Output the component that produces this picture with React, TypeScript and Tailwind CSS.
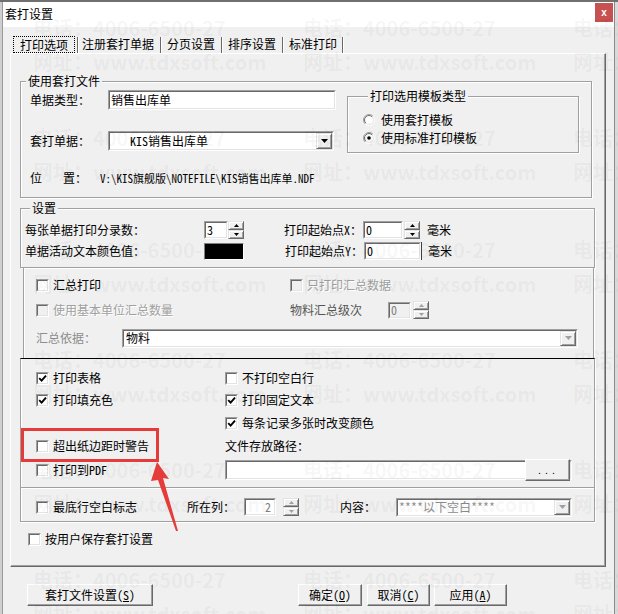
import React from "react";

const raised =
  "border border-t-[#e3e3e3] border-l-[#e3e3e3] border-r-[#696969] border-b-[#696969] bg-[#f0f0f0] shadow-[inset_1px_1px_0_#fff,inset_-1px_-1px_0_#a0a0a0]";

function Sunken({ className = "", inner = "bg-white", children }: { className?: string; inner?: string; children?: React.ReactNode }) {
  return (
    <div className={`flex border border-t-[#a0a0a0] border-l-[#a0a0a0] border-r-white border-b-white ${className}`}>
      <div className={`flex flex-1 items-center min-w-0 border border-t-[#696969] border-l-[#696969] border-r-[#e3e3e3] border-b-[#e3e3e3] ${inner}`}>
        {children}
      </div>
    </div>
  );
}

function Check({ checked = false, disabled = false }: { checked?: boolean; disabled?: boolean }) {
  return (
    <span className="flex w-[13px] h-[13px] shrink-0 border border-t-[#a0a0a0] border-l-[#a0a0a0] border-r-white border-b-white">
      <span
        className={`flex flex-1 items-center justify-center border border-t-[#696969] border-l-[#696969] border-r-[#e3e3e3] border-b-[#e3e3e3] ${
          disabled ? "bg-[#f0f0f0]" : "bg-white"
        }`}
      >
        {checked && (
          <svg width="9" height="9" viewBox="0 0 9 9">
            <path d="M1.2 4.2 L3.6 6.6 L8 1.6" stroke="#000" strokeWidth="1.9" fill="none" />
          </svg>
        )}
      </span>
    </span>
  );
}

function CheckRow({ label, checked, disabled, className = "" }: { label: string; checked?: boolean; disabled?: boolean; className?: string }) {
  return (
    <div className={`flex items-center h-[16px] ${className}`}>
      <Check checked={checked} disabled={disabled} />
      <span className={`ml-[4px] whitespace-nowrap ${disabled ? "text-[#a0a0a0] [text-shadow:1px_1px_0_#fff]" : ""}`}>{label}</span>
    </div>
  );
}

function Radio({ checked = false }: { checked?: boolean }) {
  return (
    <svg width="12" height="12" viewBox="0 0 12 12" className="shrink-0">
      <defs>
        <linearGradient id="ro" x1="0" y1="0" x2="1" y2="1">
          <stop offset="0.45" stopColor="#a0a0a0" />
          <stop offset="0.55" stopColor="#ffffff" />
        </linearGradient>
        <linearGradient id="ri" x1="0" y1="0" x2="1" y2="1">
          <stop offset="0.45" stopColor="#696969" />
          <stop offset="0.55" stopColor="#e3e3e3" />
        </linearGradient>
      </defs>
      <circle cx="6" cy="6" r="5.5" fill="none" stroke="url(#ro)" />
      <circle cx="6" cy="6" r="4.5" fill="#fff" stroke="url(#ri)" />
      {checked && <circle cx="6" cy="6" r="1.8" fill="#000" />}
    </svg>
  );
}

function Spin({ disabled = false }: { disabled?: boolean }) {
  const c = disabled ? "#a0a0a0" : "#000";
  return (
    <div className="flex flex-col w-[16px] h-[18px] shrink-0">
      <div className={`flex flex-1 items-center justify-center ${raised}`}>
        <svg width="5" height="3" viewBox="0 0 5 3">
          <path d="M2.5 0 L5 3 L0 3 Z" fill={c} />
        </svg>
      </div>
      <div className={`flex flex-1 items-center justify-center ${raised}`}>
        <svg width="5" height="3" viewBox="0 0 5 3">
          <path d="M0 0 L5 0 L2.5 3 Z" fill={c} />
        </svg>
      </div>
    </div>
  );
}

function DropBtn({ disabled = false }: { disabled?: boolean }) {
  return (
    <div className={`ml-auto flex items-center justify-center w-[16px] h-full shrink-0 ${raised}`}>
      <svg width="7" height="4" viewBox="0 0 7 4">
        <path d="M0 0 L7 0 L3.5 4 Z" fill={disabled ? "#a0a0a0" : "#000"} />
      </svg>
    </div>
  );
}

function Button({ className = "", children }: { className?: string; children: React.ReactNode }) {
  return (
    <div
      className={`flex items-center justify-center h-[22px] border border-t-white border-l-white border-r-[#696969] border-b-[#696969] bg-[#f0f0f0] shadow-[inset_-1px_-1px_0_#a0a0a0] ${className}`}
    >
      {children}
    </div>
  );
}

const legend = "ml-[5px] px-[2px] leading-[14px] bg-[#f0f0f0]";
const groupBox = "border border-[#a0a0a0] shadow-[inset_1px_1px_0_#fff,1px_1px_0_#fff]";

const markRows = [28, 138, 250, 360, 470, 580];
const markCols = [33, 303, 573];

export default function App() {
  return (
    <div className="relative w-[618px] h-[614px] overflow-hidden bg-[#dadada] text-[12px] leading-[16px] text-black font-['Noto_Sans_Mono_CJK_SC','Noto_Sans_CJK_SC',sans-serif]">
      <div className="h-[2px] bg-[#707070]" />
      <div className="flex h-[612px]">
        <div className="w-[3px] bg-[#cfcfcf] border-r border-[#9a9a9a]" />
        <div className="w-[612px] flex flex-col border-r border-[#8a8a8a] bg-[#f0f0f0]">
          {/* title bar */}
          <div className="flex items-start h-[25px] bg-white">
            <span className="pl-[2px] mt-[4px] font-['Noto_Sans_CJK_SC',sans-serif] text-[12px]">套打设置</span>
            <div className="ml-auto mt-[1px] mr-[1px] w-[18px] h-[19px] bg-[#c75050] flex items-center justify-center text-white text-[10px] font-bold font-['Liberation_Sans',sans-serif]">
              x
            </div>
          </div>

          {/* tabs */}
          <div className="flex items-end h-[19px] mt-[7px] pl-[10px]">
            <div className="flex items-center justify-center w-[62px] h-[17px] border border-dotted border-black">打印选项</div>
            <span className="ml-[2px] h-[16px] w-[2px] border-l border-[#696969] bg-white" />
            <span className="ml-[3px] mb-[1px]">注册套打单据</span>
            <span className="ml-[6px] h-[16px] w-[2px] border-l border-[#696969] bg-white" />
            <span className="ml-[5px] mb-[1px]">分页设置</span>
            <span className="ml-[6px] h-[16px] w-[2px] border-l border-[#696969] bg-white" />
            <span className="ml-[5px] mb-[1px]">排序设置</span>
            <span className="ml-[6px] h-[16px] w-[2px] border-l border-[#696969] bg-white" />
            <span className="ml-[5px] mb-[1px]">标准打印</span>
            <span className="ml-[5px] h-[16px] w-[2px] border-l border-[#696969] bg-white" />
          </div>

          {/* tab page */}
          <div className="ml-[7px] w-[596px] h-[514px] flex flex-col border border-t-white border-l-white border-r-[#696969] border-b-[#696969] shadow-[inset_-1px_-1px_0_#a0a0a0]">
            {/* 使用套打文件 */}
            <fieldset className={`mt-[20px] ml-[9px] w-[572px] pb-[11px] ${groupBox}`}>
              <legend className={legend}>使用套打文件</legend>
              <div className="flex items-start">
                <div className="w-[315px] pl-[9px] pt-[2px] flex flex-col">
                  <div className="flex items-center h-[20px]">
                    <span className="w-[78px]">单据类型：</span>
                    <Sunken className="w-[228px] h-[20px]">
                      <span className="pl-[1px]">销售出库单</span>
                    </Sunken>
                  </div>
                  <div className="flex items-center h-[20px] mt-[21px]">
                    <span className="w-[78px]">套打单据：</span>
                    <Sunken className="w-[226px] h-[20px]">
                      <span className="pl-[20px]">KIS销售出库单</span>
                      <DropBtn />
                    </Sunken>
                  </div>
                  <div className="flex items-center h-[16px] mt-[19px]">
                    <span className="w-[70px] flex">
                      <span>位</span>
                      <span className="ml-[21px]">置：</span>
                    </span>
                    <span className="text-[11px] whitespace-nowrap">V:\KIS旗舰版\NOTEFILE\KIS销售出库单.NDF</span>
                  </div>
                </div>
                <fieldset className={`ml-[11px] mt-[1px] w-[232px] pl-[15px] pt-[9px] pb-[6px] ${groupBox}`}>
                  <legend className={legend}>打印选用模板类型</legend>
                  <div className="flex items-center h-[16px]">
                    <Radio />
                    <span className="ml-[6px]">使用套打模板</span>
                  </div>
                  <div className="flex items-center h-[16px] mt-[2px]">
                    <Radio checked />
                    <span className="ml-[6px]">使用标准打印模板</span>
                  </div>
                </fieldset>
              </div>
            </fieldset>

            {/* 设置 */}
            <fieldset className={`mt-[3px] ml-[9px] w-[575px] pt-[6px] pb-[7px] pl-[4px] ${groupBox}`}>
              <legend className={legend}>设置</legend>
              <div className="flex items-center h-[18px]">
                <span className="w-[179px]">每张单据打印分录数：</span>
                <Sunken className="w-[24px] h-[18px]">
                  <span className="pl-[1px]">3</span>
                </Sunken>
                <Spin />
                <span className="ml-[40px] w-[79px]">打印起始点X：</span>
                <Sunken className="w-[40px] h-[18px]">
                  <span className="pl-[1px]">0</span>
                </Sunken>
                <span className="ml-[1px]">
                  <Spin />
                </span>
                <span className="ml-[7px]">毫米</span>
              </div>
              <div className="flex items-center h-[18px] mt-[3px]">
                <span className="w-[179px]">单据活动文本颜色值：</span>
                <div className="w-[40px] h-[17px] bg-black border border-t-[#808080] border-l-[#808080] border-r-white border-b-white" />
                <span className="ml-[41px] w-[79px]">打印起始点Y：</span>
                <Sunken className="w-[57px] h-[18px]">
                  <span className="pl-[1px]">0</span>
                </Sunken>
                <span className="w-px h-[18px] bg-[#404040]" />
                <span className="ml-[6px]">毫米</span>
              </div>
            </fieldset>

            {/* 汇总 */}
            <div className="ml-[12px] w-[571px] h-[90px] flex flex-col pt-[9px] pl-[12px] border-l border-r border-[#a0a0a0] shadow-[inset_1px_0_0_#fff,1px_0_0_#fff]">
              <div className="flex items-center h-[16px]">
                <CheckRow label="汇总打印" className="w-[254px]" />
                <CheckRow label="只打印汇总数据" disabled />
              </div>
              <div className="flex items-center h-[18px] mt-[8px]">
                <CheckRow label="使用基本单位汇总数量" disabled className="w-[254px]" />
                <span className="w-[98px] text-[#555]">物料汇总级次</span>
                <Sunken className="w-[23px] h-[17px]" inner="bg-[#f0f0f0]">
                  <span className="pl-[1px] text-[#808080]">0</span>
                </Sunken>
                <span className="ml-[2px]">
                  <Spin disabled />
                </span>
              </div>
              <div className="flex items-center h-[20px] mt-[9px]">
                <span className="w-[86px] text-[#8c8c8c]">汇总依据：</span>
                <Sunken className="w-[456px] h-[19px]">
                  <span className="pl-[2px]">物料</span>
                  <DropBtn disabled />
                </Sunken>
              </div>
            </div>

            {/* options */}
            <div className="ml-[9px] w-[575px] flex flex-col pt-[11px] pb-[4px] border-t border-l border-r border-b border-[#a0a0a0] border-t-black shadow-[inset_1px_0_0_#fff,1px_1px_0_#fff]">
              <div className="flex pl-[15px]">
                <div className="w-[189px] flex flex-col">
                  <CheckRow label="打印表格" checked />
                  <CheckRow label="打印填充色" checked className="mt-[6px]" />
                  <div className="h-[16px] mt-[7px]" />
                  <CheckRow label="超出纸边距时警告" className="mt-[7px]" />
                  <div className="flex items-center h-[20px] mt-[6px]">
                    <CheckRow label="打印到PDF" />
                  </div>
                </div>
                <div className="flex flex-col">
                  <CheckRow label="不打印空白行" />
                  <CheckRow label="打印固定文本" checked className="mt-[6px]" />
                  <CheckRow label="每条记录多张时改变颜色" checked className="mt-[7px]" />
                  <span className="h-[16px] mt-[7px]">文件存放路径：</span>
                  <Sunken className="mt-[6px] w-[347px] h-[20px]">
                    <Button className="ml-auto w-[45px] h-[16px] text-[10px] tracking-[2px]">...</Button>
                  </Sunken>
                </div>
              </div>
              <div className="mt-[7px] h-[2px] border-t border-[#a0a0a0] border-b border-b-white" />
              <div className="flex items-center h-[20px] mt-[8px] pl-[15px]">
                <CheckRow label="最底行空白标志" className="w-[151px]" />
                <span className="w-[57px]">所在列：</span>
                <Sunken className="w-[32px] h-[18px]">
                  <span className="ml-auto pr-[3px] text-[#808080]">2</span>
                </Sunken>
                <span className="ml-[7px]">
                  <Spin disabled />
                </span>
                <span className="ml-[41px] w-[56px]">内容：</span>
                <Sunken className="w-[176px] h-[19px]">
                  <span className="pl-[1px] text-[#8c8c8c] whitespace-nowrap">****以下空白****</span>
                  <DropBtn disabled />
                </Sunken>
              </div>
            </div>

            <CheckRow label="按用户保存套打设置" className="mt-[9px] ml-[17px]" />
          </div>

          {/* buttons */}
          <div className="flex mt-[17px]">
            <Button className="ml-[24px] w-[126px]">
              套打文件设置(<span className="underline">S</span>)
            </Button>
            <Button className="ml-[145px] w-[64px]">
              确定(<span className="underline">O</span>)
            </Button>
            <Button className="ml-[5px] w-[63px]">
              取消(<span className="underline">C</span>)
            </Button>
            <Button className="ml-[4px] w-[73px]">
              应用(<span className="underline">A</span>)
            </Button>
          </div>
        </div>
      </div>

      {/* watermark */}
      <div className="absolute inset-0 pointer-events-none font-['Noto_Sans_CJK_SC',sans-serif] font-bold text-[20px] leading-[24px] text-black/[0.05]">
        {markRows.map((y) =>
          markCols.map((x) => (
            <React.Fragment key={`${x}-${y}`}>
              <span className="absolute whitespace-nowrap" style={{ left: x, top: y - 12 }}>
                电话：4006-6500-27
              </span>
              <span className="absolute whitespace-nowrap" style={{ left: x, top: y + 22 }}>
                网址：www.tdxsoft.com
              </span>
            </React.Fragment>
          ))
        )}
      </div>

      {/* annotation */}
      <div className="absolute left-[21px] top-[428px] w-[138px] h-[34px] border-[3px] border-[#e53b3b]" />
      <svg className="absolute left-0 top-0 pointer-events-none" width="618" height="614">
        <polygon points="157,462 169,479 163,478 178,531 176,531 158,480 151,481" fill="#e53b3b" />
      </svg>
    </div>
  );
}
